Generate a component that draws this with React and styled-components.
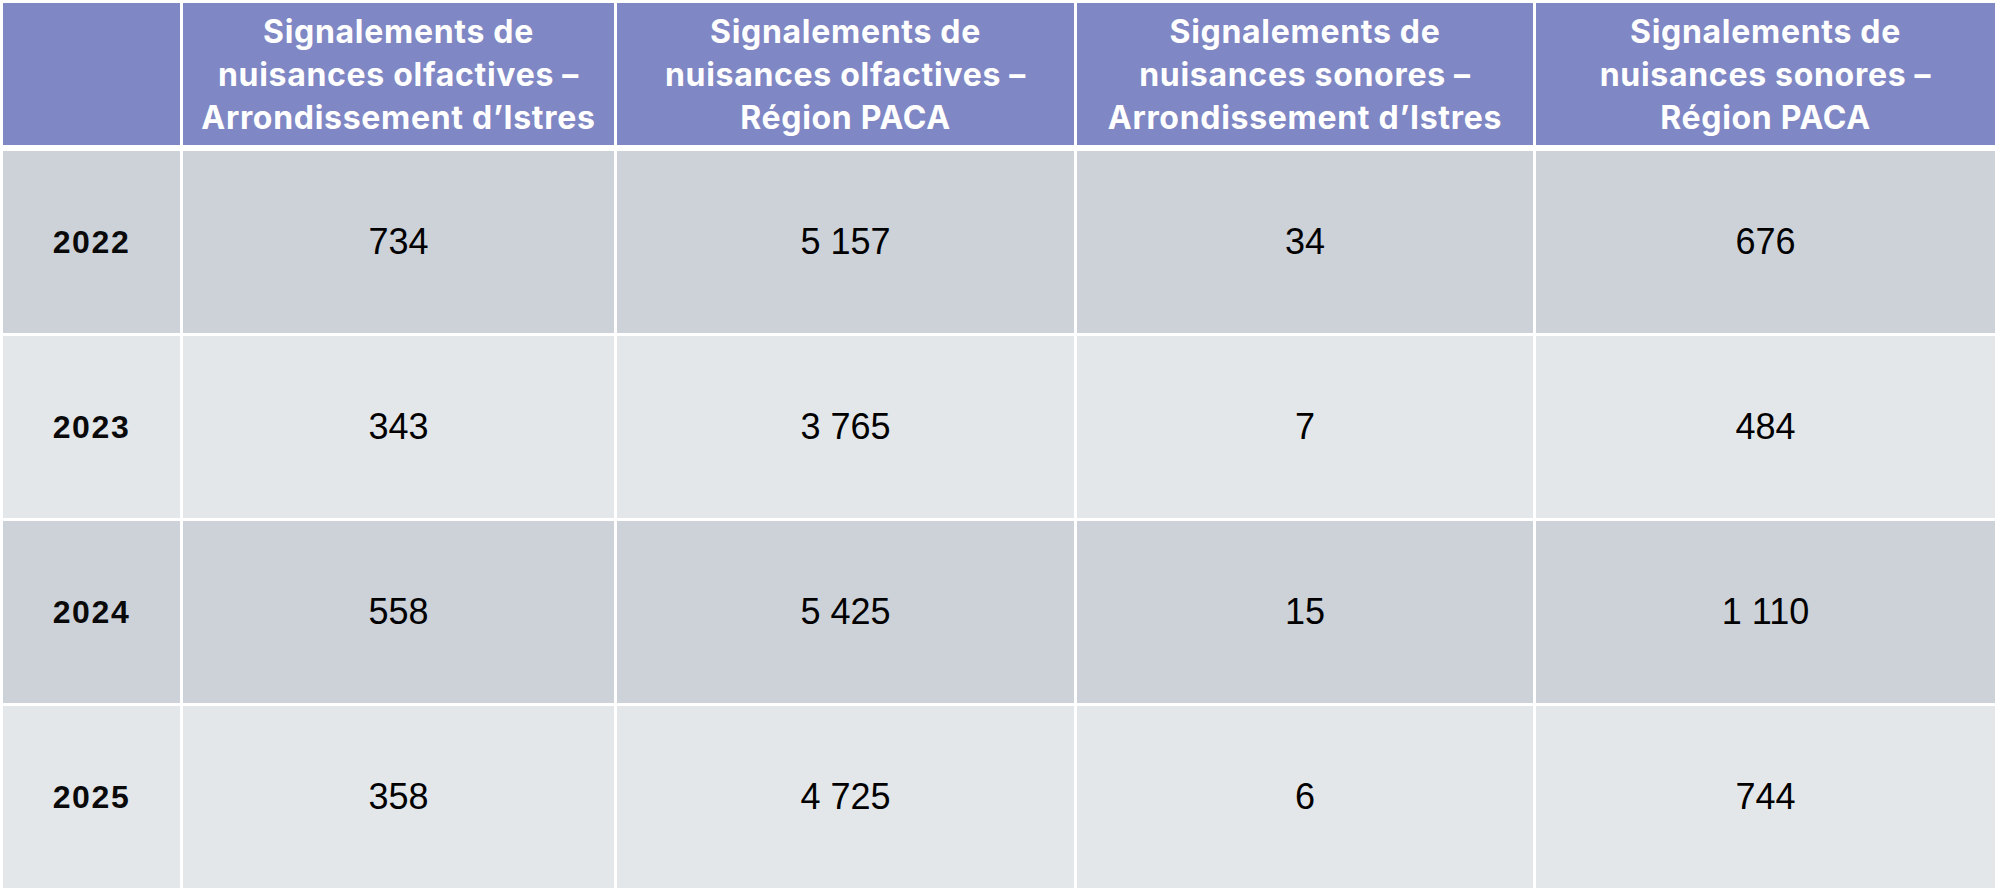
import React from "react";
import styled, { createGlobalStyle } from "styled-components";

const Global = createGlobalStyle`
  html, body { margin: 0; padding: 0; background: #ffffff; }
  body { font-family: "Liberation Sans", Arial, sans-serif; }
`;

const COLS = "177px 431px 457px 456px 459px";

const Table = styled.div`
  display: flex;
  flex-direction: column;
  gap: 3px;
  padding: 3px 5px 5px 3px;
  width: 1992px;
  box-sizing: border-box;
  background: #ffffff;
`;

const Row = styled.div`
  display: grid;
  grid-template-columns: ${COLS};
  gap: 3px;
  height: ${(p) => p.$height}px;
  margin-bottom: ${(p) => (p.$header ? 3 : 0)}px;
`;

const HeadCell = styled.div`
  background: #7f87c4;
  color: #ffffff;
  font-family: Inter, "Open Sans", sans-serif;
  font-weight: 700;
  font-size: 32px;
  line-height: 43px;
  letter-spacing: 0.7px;
  display: flex;
  align-items: center;
  justify-content: center;
  text-align: center;
  padding: 0 4px;
`;

const Cell = styled.div`
  background: ${(p) => (p.$dark ? "#cdd2d9" : "#e4e7ea")};
  display: flex;
  align-items: center;
  justify-content: center;
  color: #000000;
  font-family: "Liberation Sans", Arial, sans-serif;
  font-size: 36px;
  font-weight: 400;
`;

const YearCell = styled(Cell)`
  font-size: 32px;
  font-weight: 700;
  letter-spacing: 1.6px;
  color: #0a0a0a;
`;

const headers = [
  ["Signalements de", "nuisances olfactives –", "Arrondissement d’Istres"],
  ["Signalements de", "nuisances olfactives –", "Région PACA"],
  ["Signalements de", "nuisances sonores –", "Arrondissement d’Istres"],
  ["Signalements de", "nuisances sonores –", "Région PACA"],
];

const data = [
  ["2022", "734", "5 157", "34", "676"],
  ["2023", "343", "3 765", "7", "484"],
  ["2024", "558", "5 425", "15", "1 110"],
  ["2025", "358", "4 725", "6", "744"],
];

export default function App() {
  return (
    <>
      <Global />
      <Table>
        <Row $height={142} $header>
          <HeadCell />
          {headers.map((lines, i) => (
            <HeadCell key={i}>
              <div>
                {lines.map((l, j) => (
                  <div key={j}>{l}</div>
                ))}
              </div>
            </HeadCell>
          ))}
        </Row>
        {data.map((row, r) => (
          <Row key={r} $height={182}>
            <YearCell $dark={r % 2 === 0}>{row[0]}</YearCell>
            {row.slice(1).map((v, c) => (
              <Cell key={c} $dark={r % 2 === 0}>
                {v}
              </Cell>
            ))}
          </Row>
        ))}
      </Table>
    </>
  );
}
